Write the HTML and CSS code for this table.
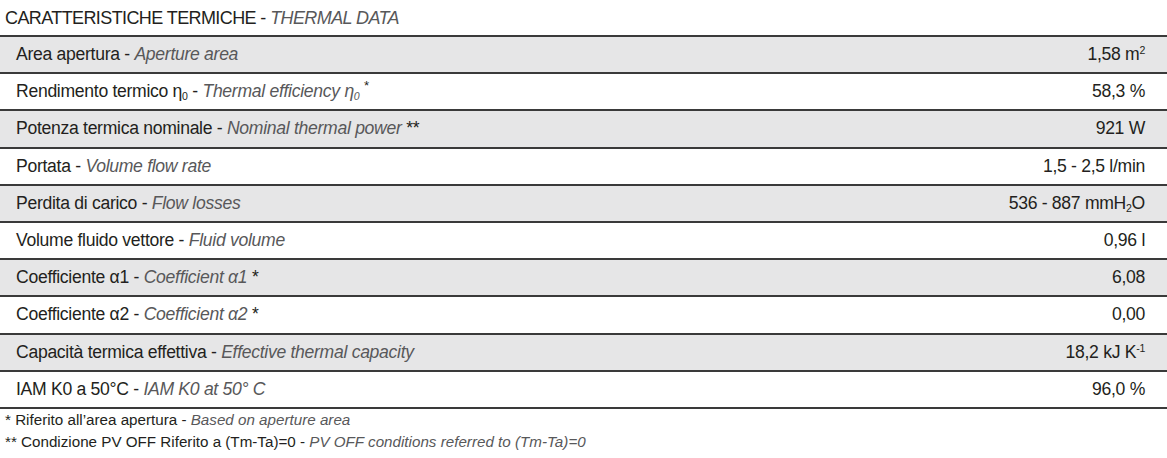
FILE: index.html
```html
<!DOCTYPE html>
<html lang="it">
<head>
<meta charset="utf-8">
<title>Caratteristiche termiche</title>
<link rel="stylesheet" href="styles.css">
</head>
<body>
<div class="sheet">
  <h1 class="title">CARATTERISTICHE TERMICHE - <em>THERMAL DATA</em></h1>
  <div class="table">
    <div class="row shade"><span class="label">Area apertura - <em>Aperture area</em></span><span class="value">1,58 m<sup>2</sup></span></div>
    <div class="row"><span class="label">Rendimento termico η<sub>0</sub> - <em>Thermal efficiency η<sub>0</sub></em> <sup class="star">*</sup></span><span class="value">58,3 %</span></div>
    <div class="row shade"><span class="label">Potenza termica nominale - <em>Nominal thermal power</em> **</span><span class="value">921 W</span></div>
    <div class="row"><span class="label">Portata - <em>Volume flow rate</em></span><span class="value">1,5 - 2,5 l/min</span></div>
    <div class="row shade"><span class="label">Perdita di carico - <em>Flow losses</em></span><span class="value">536 - 887 mmH<sub>2</sub>O</span></div>
    <div class="row"><span class="label">Volume fluido vettore - <em>Fluid volume</em></span><span class="value">0,96 l</span></div>
    <div class="row shade"><span class="label">Coefficiente α1 - <em>Coefficient α1</em> *</span><span class="value">6,08</span></div>
    <div class="row"><span class="label">Coefficiente α2 - <em>Coefficient α2</em> *</span><span class="value">0,00</span></div>
    <div class="row shade"><span class="label">Capacità termica effettiva - <em>Effective thermal capacity</em></span><span class="value">18,2 kJ K<sup>-1</sup></span></div>
    <div class="row"><span class="label">IAM K0 a 50°C - <em>IAM K0 at 50° C</em></span><span class="value">96,0 %</span></div>
  </div>
  <div class="notes">
    <p>* Riferito all’area apertura - <em>Based on aperture area</em></p>
    <p>** Condizione PV OFF Riferito a (Tm-Ta)=0 - <em>PV OFF conditions referred to (Tm-Ta)=0</em></p>
  </div>
</div>
</body>
</html>
```
FILE: styles.css
```css
html, body {
  margin: 0;
  padding: 0;
  background: #ffffff;
}
body {
  font-family: "Liberation Sans Narrow", "Liberation Sans", Arial, sans-serif;
  color: #231f20;
}
.sheet {
  width: 1167px;
}
em {
  font-style: italic;
  color: #58585a;
}
.title {
  margin: 0;
  height: 35px;
  padding-left: 5px;
  font-size: 18px;
  font-weight: normal;
  line-height: 36px;
  letter-spacing: -0.6px;
}
.table {
  border-top: 2px solid #3a3a3a;
}
.row {
  display: flex;
  justify-content: space-between;
  align-items: center;
  height: 35.2px;
  border-bottom: 2px solid #3a3a3a;
  padding: 0 22px 0 16px;
  font-size: 17.6px;
  letter-spacing: -0.3px;
}
.row.shade {
  background: #e6e6e7;
}
sup, sub {
  font-size: 0.6em;
  line-height: 0;
}
sup {
  vertical-align: 0.6em;
}
sub {
  vertical-align: -0.3em;
}
sup.star {
  font-size: 0.75em;
  vertical-align: 0.5em;
}
.notes {
  padding: 0 0 0 5px;
  font-size: 15.2px;
}
.notes p {
  margin: 0;
  height: 22px;
  line-height: 22px;
}
```
